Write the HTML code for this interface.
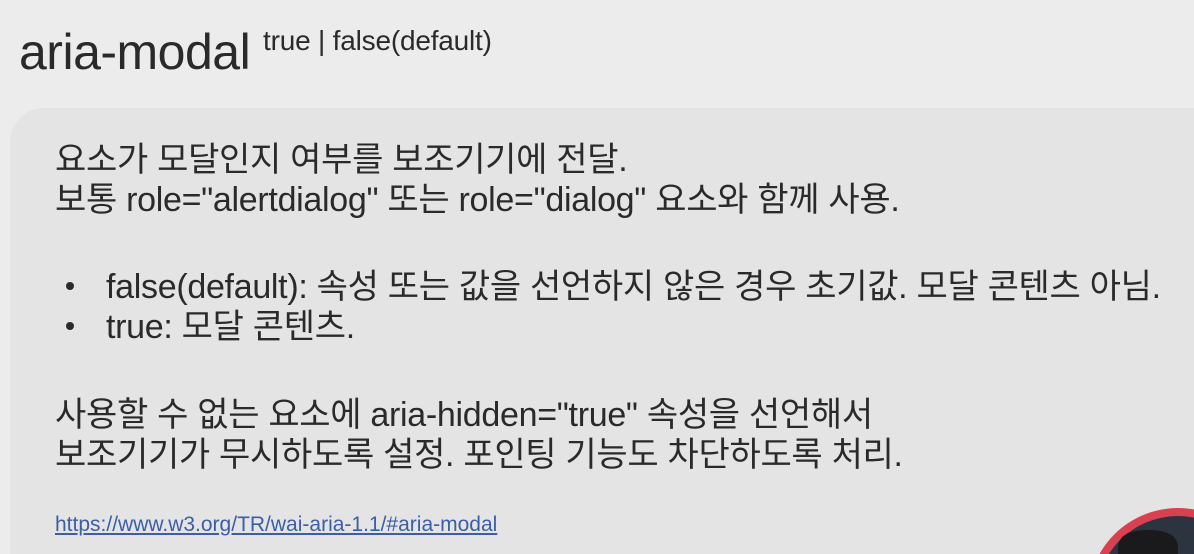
<!DOCTYPE html>
<html><head><meta charset="utf-8"><style>
html,body{margin:0;width:1194px;height:554px;overflow:hidden}
body{background:#ececec;position:relative;font-family:"Liberation Sans","Noto Sans CJK KR",sans-serif;color:#2a2a2a}
.t{position:absolute;white-space:nowrap;line-height:1.2}
.panel{position:absolute;left:10px;top:108px;width:1184px;height:446px;background:#e4e4e4;border-radius:34px 0 0 0}
.k{font-size:34px;letter-spacing:-0.3px}
.dot{position:absolute;width:8px;height:8px;border-radius:50%;background:#2a2a2a}
</style></head><body>
<div class="t" style="left:19px;top:22px;font-size:50px;letter-spacing:-0.5px">aria-modal</div>
<div class="t" style="left:263px;top:24px;font-size:28px;letter-spacing:-0.2px">true | false(default)</div>
<div class="panel"></div>
<div class="t k" style="left:55px;top:140px">요소가 모달인지 여부를 보조기기에 전달.</div>
<div class="t k" style="left:55px;top:180px">보통 role="alertdialog" 또는 role="dialog" 요소와 함께 사용.</div>
<div class="dot" style="left:66px;top:282px"></div>
<div class="t k" style="left:106px;top:267px">false(default): 속성 또는 값을 선언하지 않은 경우 초기값. 모달 콘텐츠 아님.</div>
<div class="dot" style="left:66px;top:322px"></div>
<div class="t k" style="left:106px;top:307px">true: 모달 콘텐츠.</div>
<div class="t k" style="left:55px;top:395px">사용할 수 없는 요소에 aria-hidden="true" 속성을 선언해서</div>
<div class="t k" style="left:55px;top:435px">보조기기가 무시하도록 설정. 포인팅 기능도 차단하도록 처리.</div>
<div class="t" style="left:55px;top:512px;font-size:21px;color:#3b5ea8;text-decoration:underline">https://www.w3.org/TR/wai-aria-1.1/#aria-modal</div>
<svg style="position:absolute;left:1080px;top:500px" width="114" height="54" viewBox="0 0 114 54">
<circle cx="98" cy="98" r="90" fill="#d8414f"/>
<circle cx="98" cy="98" r="82" fill="#2c3440"/>
<path d="M38 54 V48 Q38 30 68 30 Q98 30 98 48 V54 Z" fill="#1a1a1c"/>
</svg>
</body></html>
